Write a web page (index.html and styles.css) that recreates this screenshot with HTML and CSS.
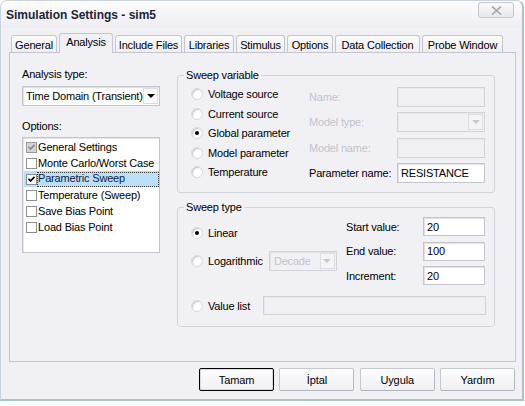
FILE: index.html
```html
<!DOCTYPE html>
<html>
<head>
<meta charset="utf-8">
<link rel="stylesheet" href="styles.css">
</head>
<body>
<div class="window">
  <div class="titlebar">
    <span class="title">Simulation Settings - sim5</span>
    <span class="close"><svg width="11" height="9" viewBox="0 0 11 9"><path d="M1 0.5 L10 8.5 M10 0.5 L1 8.5" stroke="#a4a4ae" stroke-width="1.6" fill="none"/></svg></span>
  </div>
  <div class="tabs">
    <div class="tab t-general">General</div>
    <div class="tab active t-analysis">Analysis</div>
    <div class="tab t-include">Include Files</div>
    <div class="tab t-libraries">Libraries</div>
    <div class="tab t-stimulus">Stimulus</div>
    <div class="tab t-options">Options</div>
    <div class="tab t-data">Data Collection</div>
    <div class="tab t-probe">Probe Window</div>
  </div>
  <div class="panel">
    <div class="leftcol">
      <div class="lbl">Analysis type:</div>
      <div class="combo analysis-combo">
        <span class="combo-text">Time Domain (Transient)</span>
        <span class="drop"><span class="tri"></span></span>
      </div>
      <div class="lbl options-lbl">Options:</div>
      <div class="listbox">
        <div class="item"><span class="cb grayed"><svg width="9" height="9" viewBox="0 0 9 9"><path d="M1.5 3.8 L3.5 6 L7.5 1.8" stroke="#8c8c8c" stroke-width="1.7" fill="none"/></svg></span><span class="itext">General Settings</span></div>
        <div class="item"><span class="cb"></span><span class="itext">Monte Carlo/Worst Case</span></div>
        <div class="item sel"><span class="cb"><svg width="9" height="9" viewBox="0 0 9 9"><path d="M1.5 3.8 L3.5 6 L7.5 1.8" stroke="#000" stroke-width="1.7" fill="none"/></svg></span><span class="itext focus">Parametric Sweep</span></div>
        <div class="item"><span class="cb"></span><span class="itext">Temperature (Sweep)</span></div>
        <div class="item"><span class="cb"></span><span class="itext">Save Bias Point</span></div>
        <div class="item"><span class="cb"></span><span class="itext">Load Bias Point</span></div>
      </div>
    </div>
    <div class="rightcol">
      <div class="group sweep-var">
        <span class="legend">Sweep variable</span>
        <div class="sv-body">
          <div class="radios">
            <div class="rrow"><span class="radio"></span><span>Voltage source</span></div>
            <div class="rrow"><span class="radio"></span><span>Current source</span></div>
            <div class="rrow"><span class="radio on"></span><span>Global parameter</span></div>
            <div class="rrow"><span class="radio"></span><span>Model parameter</span></div>
            <div class="rrow"><span class="radio"></span><span>Temperature</span></div>
          </div>
          <div class="fields">
            <span class="flabel disabled">Name:</span><span class="field disabled"></span>
            <span class="flabel disabled">Model type:</span><span class="combo field disabled"><span class="combo-text"></span><span class="drop"><span class="tri"></span></span></span>
            <span class="flabel disabled">Model name:</span><span class="field disabled"></span>
            <span class="flabel">Parameter name:</span><span class="field">RESISTANCE</span>
          </div>
        </div>
      </div>
      <div class="group sweep-type">
        <span class="legend">Sweep type</span>
        <div class="st-top">
          <div class="st-left">
            <div class="rrow linear-row"><span class="radio on"></span><span>Linear</span></div>
            <div class="rrow log-row"><span class="radio"></span><span>Logarithmic</span>
              <span class="combo decade disabled"><span class="combo-text">Decade</span><span class="drop"><span class="tri"></span></span></span>
            </div>
          </div>
          <div class="st-fields">
            <span class="flabel">Start value:</span><span class="field">20</span>
            <span class="flabel">End value:</span><span class="field">100</span>
            <span class="flabel">Increment:</span><span class="field">20</span>
          </div>
        </div>
        <div class="rrow value-row"><span class="radio"></span><span>Value list</span><span class="field disabled value-field"></span></div>
      </div>
    </div>
  </div>
  <div class="buttons">
    <button class="btn default">Tamam</button>
    <button class="btn">İptal</button>
    <button class="btn">Uygula</button>
    <button class="btn">Yardım</button>
  </div>
</div>
</body>
</html>
```

FILE: styles.css
```css
* { box-sizing: border-box; }
html, body { margin: 0; padding: 0; background: #ffffff; }
body {
  font-family: "Liberation Sans", Arial, sans-serif;
  font-size: 11px;
  letter-spacing: -0.18px;
  color: #000;
}
.window {
  width: 524px;
  height: 401px;
  background: #f1f1f5;
  border: 1px solid #c9d2dd;
  border-right: 2px solid #a9c3cc;
  border-bottom: 2px solid #a3c6c9;
  border-radius: 7px 7px 0 0;
  display: flex;
  flex-direction: column;
  overflow: hidden;
}
.titlebar {
  height: 27px;
  flex: none;
  display: flex;
  align-items: center;
  justify-content: space-between;
  padding: 0 8px 0 5px;
  background: linear-gradient(#fdfdfe, #f3f3f6 60%, #eeeef2);
}
.title {
  font-weight: bold;
  color: #1c2437;
  font-size: 12px;
  letter-spacing: 0;
}
.close {
  align-self: flex-start;
  margin-top: 1px;
  width: 36px;
  height: 16px;
  border: 1px solid #c6c8d0;
  border-radius: 3px;
  background: linear-gradient(#fafafb, #e8e8ec);
  display: flex;
  align-items: center;
  justify-content: center;
}
.tabs {
  display: flex;
  align-items: flex-end;
  height: 20px;
  margin: 5px 0 0 10px;
  position: relative;
  z-index: 1;
  flex: none;
}
.tab {
  height: 17px;
  margin-bottom: 1px;
  margin-right: 2px;
  border: 1px solid #c4c5ce;
  border-bottom: none;
  border-radius: 3px 3px 0 0;
  display: flex;
  align-items: center;
  justify-content: center;
  background: linear-gradient(#fcfcfd, #eeeef2);
  white-space: nowrap;
  padding-top: 1px;
}
.tab.active {
  height: 20px;
  margin-bottom: 0;
  background: #f1f1f5;
  padding-bottom: 4px;
}
.t-general { width: 46px; }
.t-analysis { width: 54px; }
.t-include { width: 67px; }
.t-libraries { width: 50px; }
.t-stimulus { width: 49px; }
.t-options { width: 46px; }
.t-data { width: 85px; }
.t-probe { width: 81px; }

.panel {
  margin: -1px 0 0 8px;
  width: 507px;
  height: 310px;
  border: 1px solid #c4c5ce;
  display: flex;
  padding-left: 12px;
  gap: 17px;
  flex: none;
  background: #f1f1f5;
}
.leftcol {
  width: 138px;
  padding-top: 15px;
  display: flex;
  flex-direction: column;
}
.lbl { height: 13px; line-height: 13px; }
.combo {
  display: flex;
  align-items: center;
  border: 1px solid #c3c4cc;
  background: #fff;
  box-shadow: inset 1px 1px 0 #e2e2e8;
}
.analysis-combo {
  margin-top: 5px;
  height: 20px;
}
.combo-text { flex: 1; padding-left: 3px; white-space: nowrap; overflow: hidden; }
.drop {
  width: 15px;
  height: 16px;
  margin-right: 1px;
  border: 1px solid #dcdce2;
  background: #fcfcfd;
  display: flex;
  align-items: center;
  justify-content: center;
  flex: none;
}
.tri {
  width: 0;
  height: 0;
  border-left: 4px solid transparent;
  border-right: 4px solid transparent;
  border-top: 4px solid #000;
}
.options-lbl { margin-top: 14px; }
.listbox {
  margin-top: 4px;
  height: 116px;
  border: 1px solid #c3c4cc;
  box-shadow: inset 1px 1px 0 #e4e4ea;
  background: #fff;
  padding-top: 1px;
  padding-left: 1px;
}
.item {
  height: 16px;
  display: flex;
  align-items: center;
}
.item.sel { background: #bbdff6; color: #0d1b4a; }
.cb {
  width: 11px;
  height: 11px;
  margin-left: 2px;
  border: 1px solid #8c8e91;
  background: #fff;
  display: flex;
  align-items: center;
  justify-content: center;
  flex: none;
}
.cb.grayed { background: #d4d4d8; border-color: #9a9a9e; }
.itext { padding-left: 1px; white-space: nowrap; }
.itext.focus {
  flex: 1;
  height: 15px;
  line-height: 13px;
  outline: 1px dotted #333;
  outline-offset: -1px;
}

.rightcol {
  width: 318px;
  padding-top: 22px;
  display: flex;
  flex-direction: column;
}
.group {
  position: relative;
  border: 1px solid #d2d3db;
  border-radius: 3px;
}
.legend {
  position: absolute;
  top: -7px;
  left: 6px;
  padding: 0 2px;
  background: #f1f1f5;
  line-height: 13px;
}
.sweep-var { height: 118px; }
.sv-body {
  display: flex;
  padding: 8px 0 0 12px;
}
.radios { width: 119px; display: flex; flex-direction: column; padding-top: 0.25px; }
.rrow {
  display: flex;
  align-items: center;
  height: 19.5px;
  white-space: nowrap;
}
.radio {
  width: 12px;
  height: 12px;
  margin-left: 1px;
  margin-right: 5px;
  border-radius: 50%;
  background: #fff;
  border: 1px solid #d6d6de;
  box-shadow: inset 1px 1px 1px #c6c6ce;
  position: relative;
  flex: none;
}
.radio.on::after {
  content: "";
  position: absolute;
  left: 3px;
  top: 3px;
  width: 4px;
  height: 4px;
  border-radius: 50%;
  background: #000;
}
.fields {
  display: grid;
  grid-template-columns: 88px 88px;
  grid-auto-rows: 20px;
  row-gap: 5.3px;
  align-items: center;
  padding-top: 3px;
}
.flabel { white-space: nowrap; }
.disabled { color: #c3c3cb; }
.field {
  height: 20px;
  border: 1px solid #c3c4cc;
  box-shadow: inset 1px 1px 0 #e2e2e8;
  background: #fff;
  padding-left: 3px;
  display: flex;
  align-items: center;
  white-space: nowrap;
}
.field.disabled { background: #f1f1f5; border-color: #d2d3da; box-shadow: inset 1px 1px 0 #e8e8ee; }
.combo.disabled { background: #f1f1f5; border-color: #d2d3da; }
.combo.disabled .drop { border-color: #dcdce2; background: #f4f4f7; }
.combo.disabled .tri { border-top-color: #c8c8d0; }

.sweep-type { margin-top: 14px; height: 120px; }
.st-top { display: flex; padding-left: 12px; }
.st-left { width: 156px; padding-top: 15px; }
.linear-row { height: 20px; }
.log-row { height: 20px; margin-top: 8px; }
.decade {
  margin-left: 6px;
  width: 68px;
  height: 20px;
}
.decade .combo-text { padding-left: 4px; }
.st-fields {
  display: grid;
  grid-template-columns: 77px 62px;
  grid-auto-rows: 19px;
  row-gap: 5.5px;
  align-items: center;
  padding-top: 9px;
}
.st-fields .field { height: 19px; }
.value-row {
  margin: 11px 8px 0 12px;
  height: 19px;
}
.value-field { margin-left: auto; width: 223px; height: 19px; }

.buttons {
  display: flex;
  justify-content: flex-end;
  gap: 5.3px;
  margin-top: 6px;
  padding-right: 7px;
}
.btn {
  width: 75px;
  height: 23px;
  font-family: "Liberation Sans", Arial, sans-serif;
  font-size: 11px;
  letter-spacing: -0.1px;
  color: #000;
  border: 1px solid #c5c8d0;
  border-right-color: #b4b8c2;
  border-bottom-color: #b0b4be;
  border-radius: 2px;
  background: linear-gradient(#fdfdfe, #f0f0f3);
  padding: 0;
}
.btn.default {
  border: 1px solid #000;
  box-shadow: inset 0 0 0 1px #d8dae0;
}
```
